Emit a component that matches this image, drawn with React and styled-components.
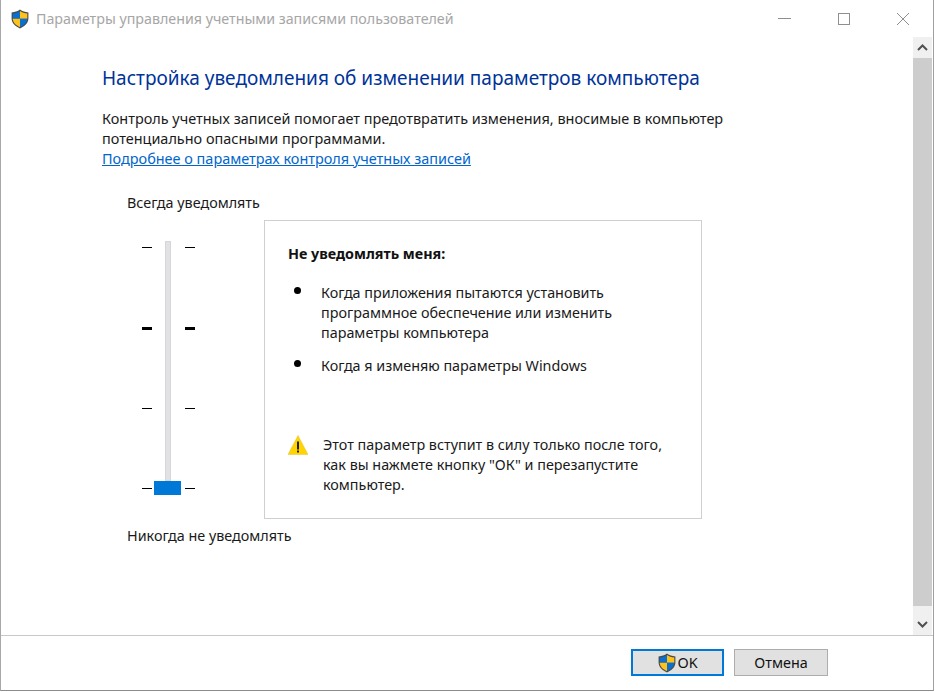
import React from 'react';
import styled, { createGlobalStyle } from 'styled-components';

const GlobalStyle = createGlobalStyle`
  html, body {
    margin: 0;
    height: 100%;
    background: #fff;
    font-family: 'Noto Sans', 'Open Sans', sans-serif;
  }
`;

const Window = styled.div`
  width: 934px;
  height: 691px;
  box-sizing: border-box;
  display: flex;
  flex-direction: column;
  background: #fff;
  border-left: 1px solid #a8a8a8;
  border-right: 1px solid #a0a0a0;
  border-bottom: 1px solid #8c8c8c;
  overflow: hidden;
`;

const TitleBar = styled.div`
  height: 37px;
  flex: none;
  display: flex;
  align-items: center;
  padding-left: 9px;
`;

const TitleText = styled.div`
  margin-left: 6px;
  font-size: 14.25px;
  color: #a6a6a6;
  white-space: nowrap;
`;

const WindowControls = styled.div`
  margin-left: auto;
  margin-right: 24px;
  display: flex;
  align-items: center;
  gap: 47px;
`;

const Main = styled.div`
  flex: 1;
  min-height: 0;
  display: flex;
`;

const Content = styled.div`
  flex: 1;
  padding: 29px 0 0 101px;
  min-width: 0;
`;

const Heading = styled.h1`
  margin: 0;
  font-size: 19px;
  line-height: 24px;
  font-weight: 400;
  color: #003399;
  white-space: nowrap;
`;

const Intro = styled.p`
  margin: 19px 0 0;
  font-size: 14.45px;
  line-height: 20px;
  color: #1a1a1a;
  white-space: nowrap;
`;

const MoreLink = styled.a`
  display: block;
  font-size: 14.45px;
  line-height: 20px;
  color: #0066cc;
  text-decoration: underline;
  white-space: nowrap;
`;

const Settings = styled.div`
  margin: 24px 0 0 25px;
  display: grid;
  grid-template-columns: 137px 438px;
  grid-template-rows: 21px auto 21px;
  row-gap: 6px;
`;

const SliderLabel = styled.div`
  grid-column: 1 / 3;
  margin-top: ${(p) => (p.$bottom ? 1 : 0)}px;
  font-size: 14.35px;
  line-height: 20px;
  color: #1a1a1a;
  white-space: nowrap;
`;

const Slider = styled.div`
  position: relative;
  margin-left: 15px;
  width: 53px;
  height: 299px;
`;

const Track = styled.div`
  position: absolute;
  left: 23px;
  top: 21px;
  width: 6px;
  height: 240px;
  background: #e1e1e6;
  border: 1px solid #d6d6d6;
  box-sizing: border-box;
`;

const Thumb = styled.div`
  position: absolute;
  left: 12px;
  top: 261px;
  width: 27px;
  height: 14px;
  background: #0078d7;
`;

const Ticks = styled.div`
  padding-top: 27px;
  display: flex;
  flex-direction: column;
`;

const TickRow = styled.div`
  height: 80.34px;
  display: flex;
  justify-content: space-between;
`;

const Tick = styled.div`
  width: 10px;
  height: ${(p) => (p.$major ? 3 : 1)}px;
  background: #000;
`;

const InfoBox = styled.div`
  box-sizing: border-box;
  height: 299px;
  border: 1px solid #cfcfcf;
  padding: 23px 0 0 23px;
  display: flex;
  flex-direction: column;
`;

const InfoTitle = styled.div`
  font-size: 14.3px;
  line-height: 20px;
  font-weight: 700;
  color: #111;
`;

const BulletList = styled.ul`
  margin: 19px 0 0;
  padding: 0;
  list-style: none;
  display: flex;
  flex-direction: column;
  gap: 13px;
`;

const BulletItem = styled.li`
  display: flex;
  font-size: 14.35px;
  line-height: 20px;
  color: #1a1a1a;
  white-space: pre-line;
`;

const Dot = styled.span`
  width: 7px;
  height: 7px;
  margin: 4px 0 0 6px;
  border-radius: 50%;
  background: #000;
  flex: none;
`;

const BulletText = styled.span`
  margin-left: 20px;
`;

const Warning = styled.div`
  margin-top: 59px;
  display: flex;
  align-items: flex-start;
  font-size: 14.35px;
  line-height: 20px;
  color: #1a1a1a;
  white-space: pre-line;
`;

const WarningText = styled.span`
  margin-left: 15px;
`;

const Scrollbar = styled.div`
  width: 19px;
  margin-right: 1px;
  flex: none;
  display: flex;
  flex-direction: column;
  background: #f0f0f0;
`;

const ScrollArrow = styled.div`
  height: 21px;
  flex: none;
  display: flex;
  align-items: center;
  justify-content: center;
`;

const ScrollThumb = styled.div`
  flex: 1;
  margin-bottom: 8px;
  background: #cdcdcd;
`;

const Footer = styled.div`
  height: 55px;
  flex: none;
  box-sizing: border-box;
  border-top: 1px solid #c8c8c8;
  display: flex;
  align-items: flex-start;
  justify-content: flex-end;
  gap: 10px;
  padding: 13px 105px 0 0;
`;

const Button = styled.button`
  box-sizing: border-box;
  width: ${(p) => (p.$primary ? 93 : 94)}px;
  height: 27px;
  padding: 0;
  background: #e1e1e1;
  border: ${(p) => (p.$primary ? '2px solid #0078d7' : '1px solid #adadad')};
  display: flex;
  align-items: center;
  justify-content: center;
  font-family: inherit;
  font-size: 14.4px;
  color: #111;
`;

function Shield({ size = 20 }) {
  return (
    <svg width={size} height={size} viewBox="0 0 20 20">
      <path d="M10 .6 C7.5 2.4 5 3.2 1.6 3.4 V9.6 C1.6 14 5 17.4 10 19.4 C15 17.4 18.4 14 18.4 9.6 V3.4 C15 3.2 12.5 2.4 10 .6 Z" fill="#4a4a4a" />
      <path d="M10 2 C7.8 3.4 5.6 4.2 2.7 4.4 V9.7 H10 Z" fill="#0a6fcf" />
      <path d="M10 2 C12.2 3.4 14.4 4.2 17.3 4.4 V9.7 H10 Z" fill="#ffc21a" />
      <path d="M2.7 9.7 H10 V18.1 C5.8 16.3 2.9 13.4 2.7 9.7 Z" fill="#ffc21a" />
      <path d="M17.3 9.7 H10 V18.1 C14.2 16.3 17.1 13.4 17.3 9.7 Z" fill="#0a6fcf" />
    </svg>
  );
}

function WarningIcon() {
  return (
    <svg width="20" height="20" viewBox="0 0 20 20" style={{ flex: 'none' }}>
      <path d="M10 .5 L20 19.5 H0 Z" fill="#ffd400" stroke="#e8c23a" strokeWidth="0.5" />
      <rect x="9" y="6.5" width="2" height="8" fill="#222" />
      <rect x="9" y="15.5" width="2" height="2" fill="#222" />
    </svg>
  );
}

function App() {
  return (
    <>
      <GlobalStyle />
      <Window>
        <TitleBar>
          <Shield />
          <TitleText>Параметры управления учетными записями пользователей</TitleText>
          <WindowControls>
            <svg width="13" height="12" viewBox="0 0 13 12">
              <path d="M0 5.5 H13" stroke="#8f8f8f" fill="none" />
            </svg>
            <svg width="12" height="12" viewBox="0 0 12 12">
              <rect x="0.5" y="0.5" width="11" height="11" stroke="#8f8f8f" fill="none" />
            </svg>
            <svg width="12" height="12" viewBox="0 0 12 12">
              <path d="M0 0 L12 12 M12 0 L0 12" stroke="#8f8f8f" fill="none" />
            </svg>
          </WindowControls>
        </TitleBar>
        <Main>
          <Content>
            <Heading>Настройка уведомления об изменении параметров компьютера</Heading>
            <Intro>
              Контроль учетных записей помогает предотвратить изменения, вносимые в компьютер
              <br />
              потенциально опасными программами.
            </Intro>
            <MoreLink href="#">Подробнее о параметрах контроля учетных записей</MoreLink>
            <Settings>
              <SliderLabel>Всегда уведомлять</SliderLabel>
              <Slider>
                <Track />
                <Ticks>
                  <TickRow><Tick /><Tick /></TickRow>
                  <TickRow><Tick $major /><Tick $major /></TickRow>
                  <TickRow><Tick /><Tick /></TickRow>
                  <TickRow><Tick /><Tick /></TickRow>
                </Ticks>
                <Thumb />
              </Slider>
              <InfoBox>
                <InfoTitle>Не уведомлять меня:</InfoTitle>
                <BulletList>
                  <BulletItem>
                    <Dot />
                    <BulletText>{'Когда приложения пытаются установить\nпрограммное обеспечение или изменить\nпараметры компьютера'}</BulletText>
                  </BulletItem>
                  <BulletItem>
                    <Dot />
                    <BulletText>Когда я изменяю параметры Windows</BulletText>
                  </BulletItem>
                </BulletList>
                <Warning>
                  <WarningIcon />
                  <WarningText>{'Этот параметр вступит в силу только после того,\nкак вы нажмете кнопку "ОК" и перезапустите\nкомпьютер.'}</WarningText>
                </Warning>
              </InfoBox>
              <SliderLabel $bottom>Никогда не уведомлять</SliderLabel>
            </Settings>
          </Content>
          <Scrollbar>
            <ScrollArrow>
              <svg width="11" height="7" viewBox="0 0 11 7">
                <path d="M1 6 L5.5 1.5 L10 6" stroke="#505050" strokeWidth="2" fill="none" />
              </svg>
            </ScrollArrow>
            <ScrollThumb />
            <ScrollArrow>
              <svg width="11" height="7" viewBox="0 0 11 7">
                <path d="M1 1 L5.5 5.5 L10 1" stroke="#505050" strokeWidth="2" fill="none" />
              </svg>
            </ScrollArrow>
          </Scrollbar>
        </Main>
        <Footer>
          <Button $primary>
            <Shield />
            OK
          </Button>
          <Button>Отмена</Button>
        </Footer>
      </Window>
    </>
  );
}

export default App;
